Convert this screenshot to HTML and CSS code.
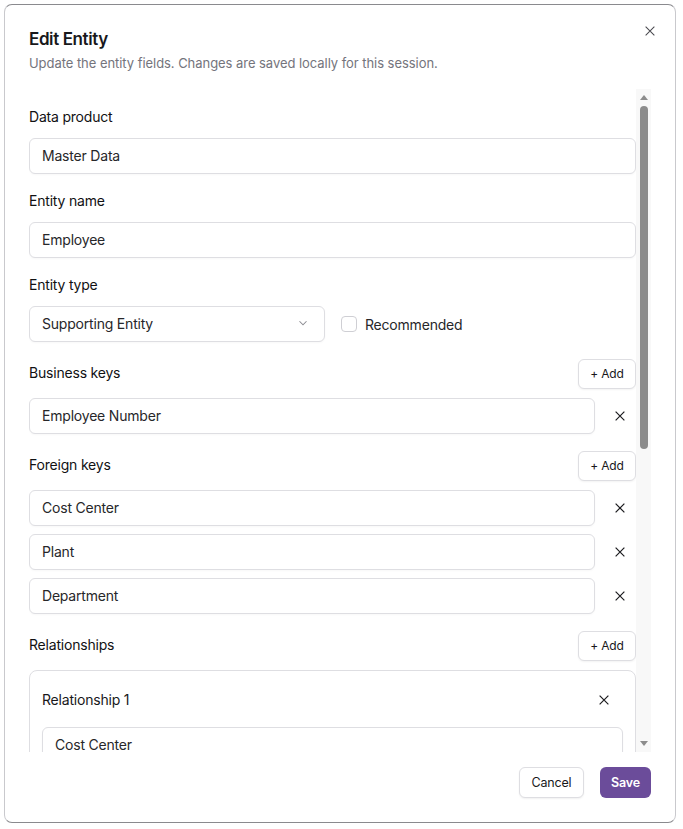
FILE: index.html
```html
<!DOCTYPE html>
<html lang="en">
<head>
    <meta charset="UTF-8">
    <meta name="viewport" content="width=device-width, initial-scale=1.0">
    <title>Edit Entity</title>
    <link rel="stylesheet" href="styles.css">
</head>
<body>
    <div class="dialog" role="dialog" aria-labelledby="dialogTitle">
        <button class="dialog-close" type="button" aria-label="Close">
            <svg viewBox="0 0 16 16"><path d="M3 3l10 10M13 3L3 13"/></svg>
        </button>

        <div class="dialog-header">
            <h2 id="dialogTitle">Edit Entity</h2>
            <p>Update the entity fields. Changes are saved locally for this session.</p>
        </div>

        <div class="dialog-scroll">
            <div class="dialog-body">
                <div class="field">
                    <label for="dataProduct">Data product</label>
                    <input type="text" id="dataProduct" value="Master Data">
                </div>

                <div class="field">
                    <label for="entityName">Entity name</label>
                    <input type="text" id="entityName" value="Employee">
                </div>

                <div class="field">
                    <label for="entityType">Entity type</label>
                    <div class="type-row">
                        <div class="select" id="entityType">
                            <span>Supporting Entity</span>
                            <svg viewBox="0 0 16 16" width="14" height="14"><path d="M4 6l4 4 4-4"/></svg>
                        </div>
                        <label class="check">
                            <span class="box"></span>
                            Recommended
                        </label>
                    </div>
                </div>

                <div class="field">
                    <div class="field-head">
                        <span class="field-title">Business keys</span>
                        <button class="add-btn" type="button">+ Add</button>
                    </div>
                    <div class="key-list">
                        <div class="key-row">
                            <input type="text" value="Employee Number">
                            <button class="remove-btn" type="button" aria-label="Remove">
                                <svg viewBox="0 0 16 16"><path d="M3 3l10 10M13 3L3 13"/></svg>
                            </button>
                        </div>
                    </div>
                </div>

                <div class="field">
                    <div class="field-head">
                        <span class="field-title">Foreign keys</span>
                        <button class="add-btn" type="button">+ Add</button>
                    </div>
                    <div class="key-list">
                        <div class="key-row">
                            <input type="text" value="Cost Center">
                            <button class="remove-btn" type="button" aria-label="Remove">
                                <svg viewBox="0 0 16 16"><path d="M3 3l10 10M13 3L3 13"/></svg>
                            </button>
                        </div>
                        <div class="key-row">
                            <input type="text" value="Plant">
                            <button class="remove-btn" type="button" aria-label="Remove">
                                <svg viewBox="0 0 16 16"><path d="M3 3l10 10M13 3L3 13"/></svg>
                            </button>
                        </div>
                        <div class="key-row">
                            <input type="text" value="Department">
                            <button class="remove-btn" type="button" aria-label="Remove">
                                <svg viewBox="0 0 16 16"><path d="M3 3l10 10M13 3L3 13"/></svg>
                            </button>
                        </div>
                    </div>
                </div>

                <div class="field">
                    <div class="field-head">
                        <span class="field-title">Relationships</span>
                        <button class="add-btn" type="button">+ Add</button>
                    </div>
                    <div class="rel-card">
                        <div class="rel-head">
                            <span>Relationship 1</span>
                            <button class="remove-btn" type="button" aria-label="Remove relationship">
                                <svg viewBox="0 0 16 16"><path d="M3 3l10 10M13 3L3 13"/></svg>
                            </button>
                        </div>
                        <div class="rel-fields">
                            <input type="text" value="Cost Center">
                            <label class="sub-label">Cardinality</label>
                            <div class="select">
                                <span>Many to one</span>
                                <svg viewBox="0 0 16 16" width="14" height="14"><path d="M4 6l4 4 4-4"/></svg>
                            </div>
                            <label class="sub-label">Description</label>
                            <input type="text" value="Employee is assigned to a cost center">
                        </div>
                    </div>
                </div>

                <div class="field">
                    <div class="field-head">
                        <span class="field-title">Attributes</span>
                        <button class="add-btn" type="button">+ Add</button>
                    </div>
                    <div class="key-list">
                        <div class="key-row">
                            <input type="text" value="First Name">
                            <button class="remove-btn" type="button" aria-label="Remove">
                                <svg viewBox="0 0 16 16"><path d="M3 3l10 10M13 3L3 13"/></svg>
                            </button>
                        </div>
                        <div class="key-row">
                            <input type="text" value="Last Name">
                            <button class="remove-btn" type="button" aria-label="Remove">
                                <svg viewBox="0 0 16 16"><path d="M3 3l10 10M13 3L3 13"/></svg>
                            </button>
                        </div>
                    </div>
                </div>
            </div>

            <!-- scrollbar for the form area -->
            <div class="scrollbar" aria-hidden="true">
                <span class="scroll-arrow up"></span>
                <div class="scroll-track">
                    <span class="scroll-thumb"></span>
                </div>
                <span class="scroll-arrow down"></span>
            </div>
        </div>

        <div class="dialog-footer">
            <button class="btn btn-outline" type="button">Cancel</button>
            <button class="btn btn-primary" type="button">Save</button>
        </div>
    </div>
</body>
</html>
```

FILE: styles.css
```css
* {
    margin: 0;
    padding: 0;
    box-sizing: border-box;
}

body {
    font-family: 'Inter', 'Liberation Sans', sans-serif;
    background: #fff;
    color: #18181b;
    letter-spacing: -0.2px;
}

button,
input {
    font-family: inherit;
    letter-spacing: inherit;
}

.dialog {
    position: relative;
    margin: 4px;
    width: 672px;
    height: 819px;
    display: flex;
    flex-direction: column;
    padding: 22px 24px 24px;
    background: #fff;
    border: 1px solid #c9c9cd;
    border-top-color: #8a8a8e;
    border-bottom-color: #8a8a8e;
    border-radius: 8px;
}

.dialog-close {
    position: absolute;
    top: 19px;
    right: 18px;
    width: 14px;
    height: 14px;
    border: none;
    background: none;
    display: flex;
    align-items: center;
    justify-content: center;
}

.dialog-close svg {
    width: 14px;
    height: 14px;
    fill: none;
    stroke: #4a4a4f;
    stroke-width: 1.2;
}

.dialog-header h2 {
    font-size: 17px;
    line-height: 24px;
    font-weight: 600;
    letter-spacing: -0.4px;
}

.dialog-header p {
    margin-top: 2px;
    font-size: 13px;
    line-height: 20px;
    color: #74747c;
    letter-spacing: -0.05px;
}

.dialog-scroll {
    margin-top: 16px;
    height: 663px;
    display: flex;
}

.dialog-body {
    flex: 1;
    min-width: 0;
    overflow: hidden;
    padding-top: 18px;
    display: flex;
    flex-direction: column;
    gap: 17px;
}

.scrollbar {
    flex: none;
    width: 15px;
    display: flex;
    flex-direction: column;
    align-items: center;
    background: #f8f8f8;
}

.scroll-arrow {
    flex: none;
    width: 15px;
    height: 15px;
    display: flex;
    justify-content: center;
    align-items: center;
}

.scroll-arrow::before {
    content: "";
    width: 0;
    height: 0;
    border-left: 4px solid transparent;
    border-right: 4px solid transparent;
    margin-left: 1px;
}

.scroll-arrow.up::before {
    border-bottom: 5px solid #8c8c8c;
    margin-top: 2px;
}

.scroll-arrow.down::before {
    border-top: 5px solid #8c8c8c;
    margin-bottom: 2px;
}

.scroll-track {
    flex: 1;
    width: 100%;
    padding: 2px 3px 0 4px;
}

.scroll-thumb {
    display: block;
    height: 343px;
    border-radius: 4px;
    background: #8c8c8c;
}

.field > label,
.field-title {
    display: block;
    font-size: 14px;
    line-height: 20px;
    font-weight: 400;
    color: #111113;
}

.field > label {
    margin-bottom: 11px;
}

input[type="text"],
.select {
    width: 100%;
    height: 36px;
    padding: 0 12px 2px;
    border: 1px solid #dedee2;
    border-radius: 6px;
    background: #fff;
    font-size: 14px;
    color: #27272a;
    box-shadow: 0 1px 2px rgba(0, 0, 0, 0.03);
}

input[type="text"]:focus {
    outline: none;
    border-color: #6b4c9a;
}

.type-row {
    display: flex;
    align-items: center;
    gap: 16px;
}

.select {
    width: 296px;
    display: flex;
    align-items: center;
    justify-content: space-between;
}

.select svg {
    fill: none;
    stroke: #8a8a90;
    stroke-width: 1.2;
    margin-right: 2px;
}

.check {
    display: flex;
    align-items: center;
    gap: 8px;
    font-size: 14px;
    color: #27272a;
}

.check .box {
    width: 16px;
    height: 16px;
    border: 1px solid #cfcfd4;
    border-radius: 4px;
}

.field-head {
    height: 30px;
    display: flex;
    align-items: center;
    justify-content: space-between;
    margin-bottom: 9px;
}

.field-title {
    padding-bottom: 2px;
}

.add-btn {
    width: 58px;
    height: 30px;
    padding-bottom: 1px;
    border: 1px solid #dedee2;
    border-radius: 6px;
    background: #fff;
    font-size: 12px;
    color: #18181b;
    box-shadow: 0 1px 2px rgba(0, 0, 0, 0.05);
}

.key-list {
    display: flex;
    flex-direction: column;
    gap: 8px;
}

.key-row {
    display: flex;
    align-items: center;
    gap: 8px;
}

.remove-btn {
    flex: none;
    width: 33px;
    height: 36px;
    border: none;
    background: none;
    display: flex;
    align-items: center;
    justify-content: center;
}

.remove-btn svg {
    width: 14px;
    height: 14px;
    fill: none;
    stroke: #1c1c1f;
    stroke-width: 1.4;
}

.rel-card {
    border: 1px solid #dedee2;
    border-radius: 8px;
    padding: 12px 12px 14px;
}

.rel-head {
    height: 34px;
    display: flex;
    align-items: center;
    justify-content: space-between;
    margin-bottom: 10px;
    font-size: 14px;
}

.rel-head span {
    padding-bottom: 2px;
}

.rel-head .remove-btn {
    width: 38px;
    height: 34px;
}

.rel-fields {
    display: flex;
    flex-direction: column;
    gap: 10px;
}

.sub-label {
    font-size: 13px;
    line-height: 18px;
    color: #52525b;
}

.rel-fields .select {
    width: 100%;
}

.dialog-footer {
    margin-top: 15px;
    display: flex;
    justify-content: flex-end;
    gap: 16px;
}

.btn {
    height: 31px;
    padding: 0 10px 1px;
    border-radius: 6px;
    font-size: 12.5px;
}

.btn-outline {
    width: 65px;
    border: 1px solid #dedee2;
    background: #fff;
    color: #18181b;
    box-shadow: 0 1px 2px rgba(0, 0, 0, 0.06);
}

.btn-primary {
    width: 51px;
    border: none;
    background: #6b4c9a;
    color: #fff;
    font-weight: 600;
}
```
